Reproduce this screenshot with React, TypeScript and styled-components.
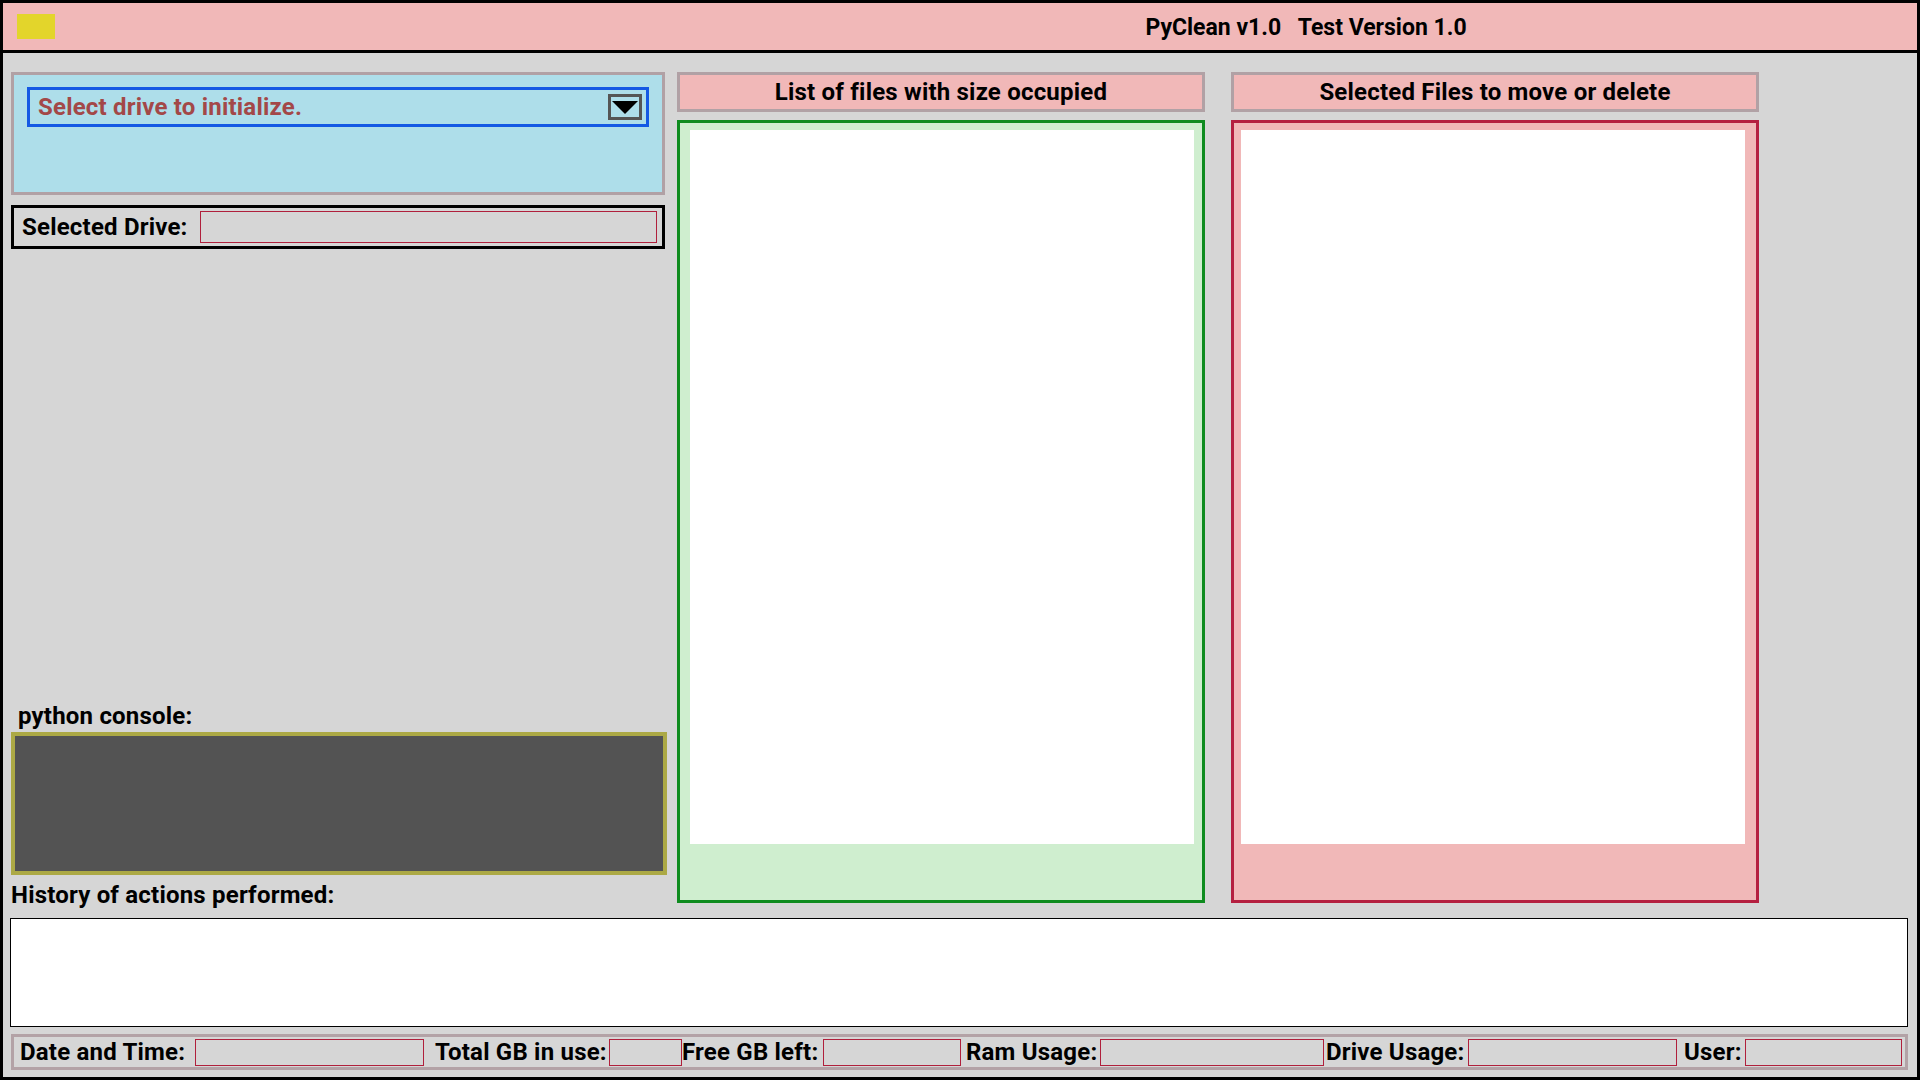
import React from "react";
import styled, { createGlobalStyle } from "styled-components";

const GlobalStyle = createGlobalStyle`
  html, body { margin: 0; padding: 0; background: #d6d6d6; }
  * { box-sizing: border-box; }
`;

const Window = styled.div`
  width: 1920px;
  height: 1080px;
  border: 3px solid #000;
  background: #d6d6d6;
  display: flex;
  flex-direction: column;
  overflow: hidden;
  font-family: Roboto, "Liberation Sans", sans-serif;
  font-weight: 700;
  font-size: 24px;
  letter-spacing: 0.2px;
  color: #000;
`;

const TitleBar = styled.header`
  height: 50px;
  flex: none;
  background: #f1b8b8;
  border-bottom: 3px solid #000;
  display: flex;
  align-items: center;
  padding-left: 14px;
`;

const AppIcon = styled.div`
  width: 38px;
  height: 25px;
  background: #e3d52b;
  flex: none;
`;

const TitleText = styled.h1`
  flex: 1;
  margin: 2px 0 0 640px;
  font-size: 23px;
  font-weight: 700;
  letter-spacing: 0;
  text-align: center;
  white-space: pre;
`;

const Body = styled.main`
  flex: 1;
  display: flex;
  flex-direction: column;
  padding: 19px 9px 7px 7px;
`;

const Upper = styled.section`
  height: 843px;
  flex: none;
  display: flex;
  margin-left: 1px;
`;

const LeftColumn = styled.div`
  width: 656px;
  display: flex;
  flex-direction: column;
`;

const DrivePanel = styled.div`
  width: 654px;
  height: 123px;
  border: 3px solid #b1a1a5;
  background: #aedeea;
  padding: 12px 0 0 13px;
`;

const Combo = styled.div`
  width: 622px;
  height: 40px;
  border: 3px solid #1459e4;
  display: flex;
  align-items: center;
  justify-content: space-between;
  padding: 0 4px 0 8px;
  color: #a34848;
`;

const ComboButton = styled.div`
  width: 34px;
  height: 26px;
  border: 3px solid #555;
  display: flex;
  align-items: center;
  justify-content: center;
`;

const DriveBox = styled.div`
  width: 654px;
  height: 44px;
  margin-top: 10px;
  border: 3px solid #000;
  display: flex;
  align-items: center;
  padding: 0 5px 0 8px;
`;

const FieldLabel = styled.span<{ $w: number; $pad?: number }>`
  width: ${(p) => p.$w}px;
  padding-left: ${(p) => p.$pad ?? 0}px;
  flex: none;
  white-space: nowrap;
`;

const DriveInput = styled.div`
  flex: 1;
  height: 32px;
  border: 1px solid #b0203c;
`;

const Spacer = styled.div`
  flex: 1;
`;

const ConsoleLabel = styled.div`
  height: 32px;
  line-height: 32px;
  padding-left: 7px;
`;

const Console = styled.div`
  width: 656px;
  height: 143px;
  border: 4px solid #aca945;
  background: #535353;
`;

const HistoryLabel = styled.div`
  height: 40px;
  line-height: 40px;
`;

const ListColumn = styled.div<{ $gap: number }>`
  width: 528px;
  margin-left: ${(p) => p.$gap}px;
  display: flex;
  flex-direction: column;
`;

const ListHeader = styled.div`
  height: 40px;
  border: 3px solid #b1a1a5;
  background: #f1b8b8;
  display: flex;
  align-items: center;
  justify-content: center;
  white-space: nowrap;
`;

const ListBox = styled.div<{ $border: string; $bg: string; $left: number }>`
  height: 783px;
  margin-top: 8px;
  border: 3px solid ${(p) => p.$border};
  background: ${(p) => p.$bg};
  padding: 7px 0 0 ${(p) => p.$left}px;
`;

const ListArea = styled.div`
  width: 504px;
  height: 714px;
  background: #fff;
`;

const History = styled.div`
  height: 109px;
  margin-top: 3px;
  border: 1px solid #000;
  background: #fff;
  flex: none;
`;

const StatusBar = styled.footer`
  height: 36px;
  margin: 7px 0 0 1px;
  flex: none;
  border: 3px solid #b3a2a6;
  display: flex;
  align-items: center;
`;

const StatusField = styled.div<{ $w: number }>`
  width: ${(p) => p.$w}px;
  height: 27px;
  flex: none;
  border: 1px solid #b0203c;
`;

const statusItems = [
  { label: "Date and Time:", lw: 181, pad: 6, fw: 229 },
  { label: "Total GB in use:", lw: 185, pad: 11, fw: 73 },
  { label: "Free GB left:", lw: 141, pad: 0, fw: 138 },
  { label: "Ram Usage:", lw: 139, pad: 5, fw: 224 },
  { label: "Drive Usage:", lw: 144, pad: 2, fw: 209 },
  { label: "User:", lw: 68, pad: 7, fw: 157 },
];

export default function App() {
  return (
    <>
      <GlobalStyle />
      <Window>
        <TitleBar>
          <AppIcon />
          <TitleText>{"PyClean v1.0   Test Version 1.0"}</TitleText>
        </TitleBar>
        <Body>
          <Upper>
            <LeftColumn>
              <DrivePanel>
                <Combo>
                  <span>Select drive to initialize.</span>
                  <ComboButton>
                    <svg width="26" height="13" viewBox="0 0 26 13">
                      <polygon points="0,0 26,0 13,13" fill="#000" />
                    </svg>
                  </ComboButton>
                </Combo>
              </DrivePanel>
              <DriveBox>
                <FieldLabel $w={178}>Selected Drive:</FieldLabel>
                <DriveInput />
              </DriveBox>
              <Spacer />
              <ConsoleLabel>python console:</ConsoleLabel>
              <Console />
              <HistoryLabel>History of actions performed:</HistoryLabel>
            </LeftColumn>
            <ListColumn $gap={10}>
              <ListHeader>List of files with size occupied</ListHeader>
              <ListBox $border="#0f8c1f" $bg="#cfeecf" $left={10}>
                <ListArea />
              </ListBox>
            </ListColumn>
            <ListColumn $gap={26}>
              <ListHeader>Selected Files to move or delete</ListHeader>
              <ListBox $border="#b52040" $bg="#f1b8b8" $left={7}>
                <ListArea />
              </ListBox>
            </ListColumn>
          </Upper>
          <History />
          <StatusBar>
            {statusItems.map((s) => (
              <React.Fragment key={s.label}>
                <FieldLabel $w={s.lw} $pad={s.pad}>
                  {s.label}
                </FieldLabel>
                <StatusField $w={s.fw} />
              </React.Fragment>
            ))}
          </StatusBar>
        </Body>
      </Window>
    </>
  );
}
